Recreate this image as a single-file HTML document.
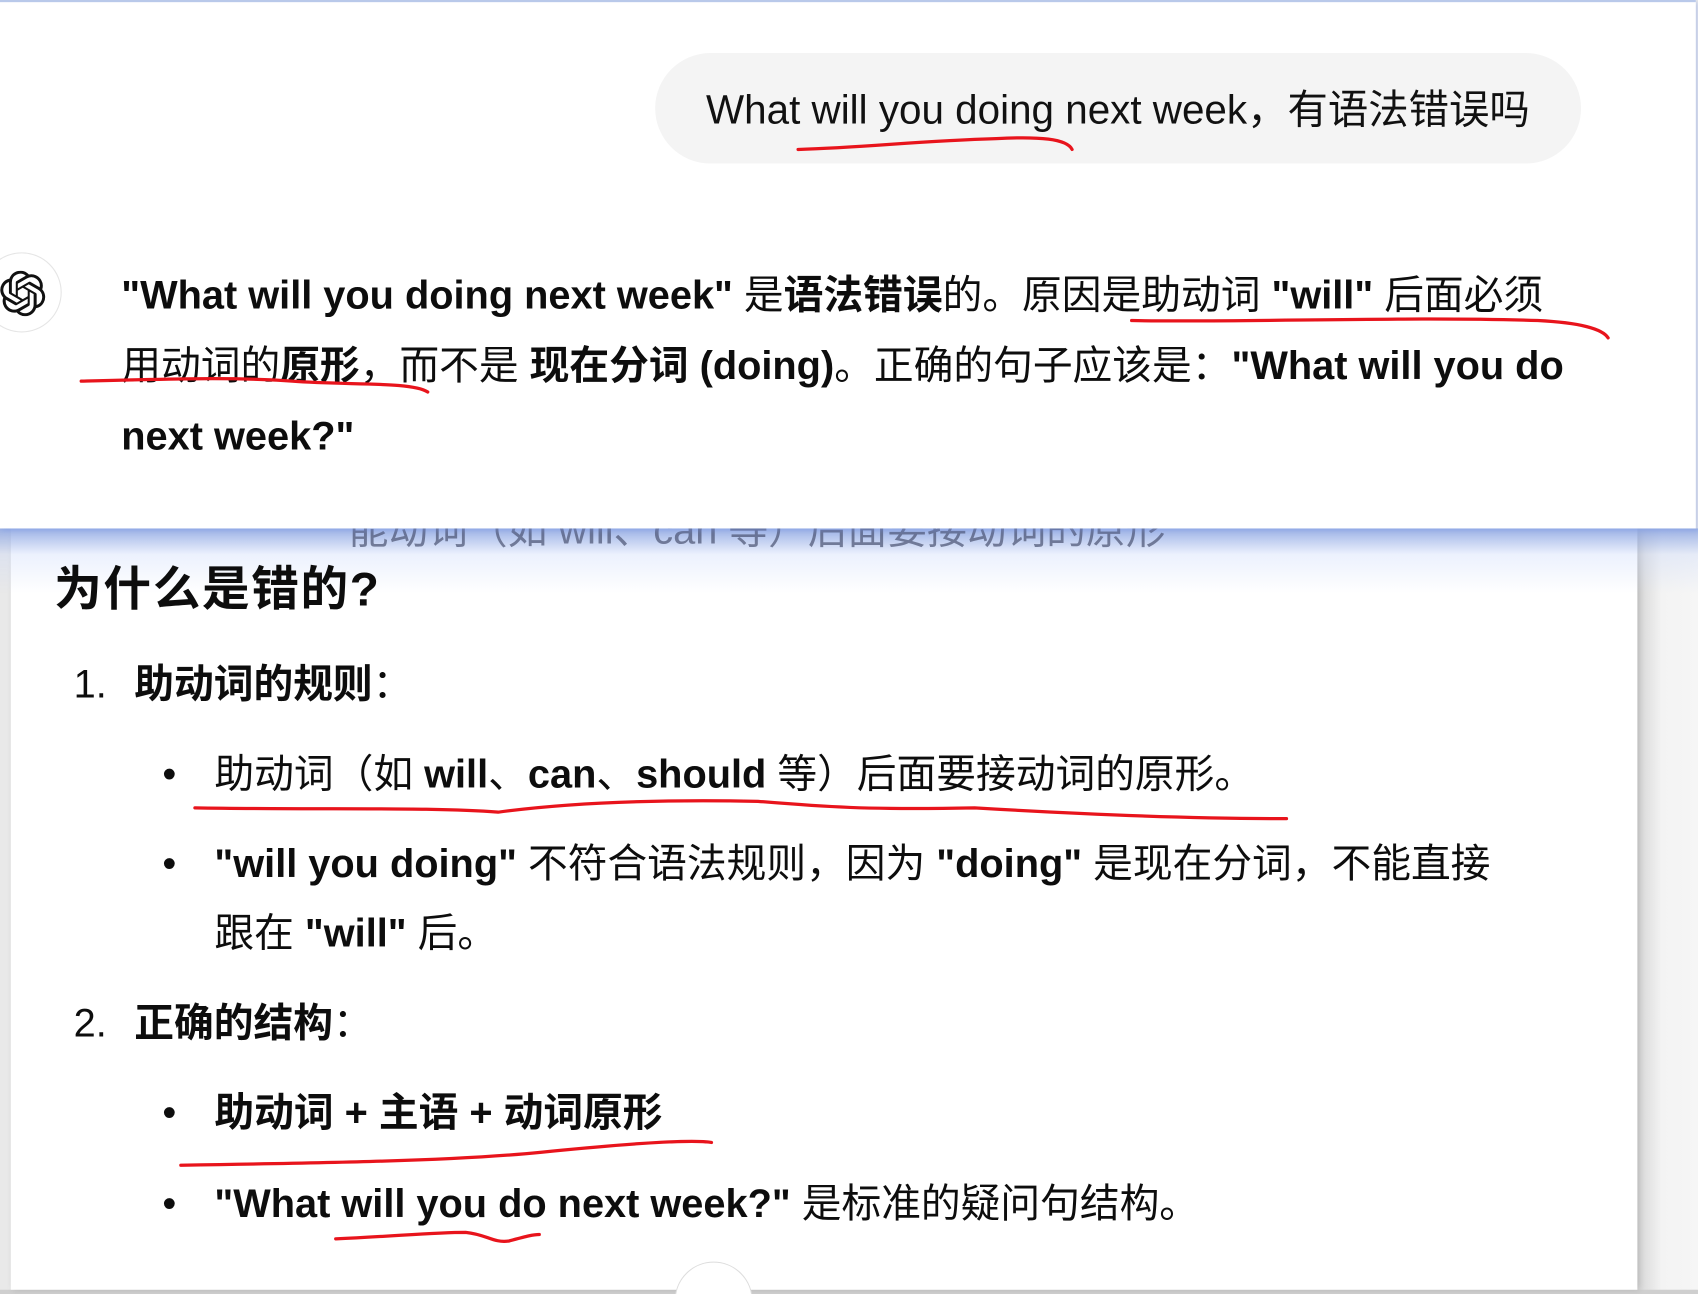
<!DOCTYPE html>
<html><head><meta charset="utf-8"><style>
html,body{margin:0;padding:0;width:1698px;height:1294px;overflow:hidden;background:#e9e9e9}
#c{position:absolute;left:0;top:0;width:1698px;height:1294px;overflow:hidden}
#w{position:absolute;left:0;top:0;width:1568px;height:1195px;overflow:hidden;transform:scale(1.0829);transform-origin:0 0;font-family:"Liberation Sans","Noto Sans CJK SC",sans-serif;color:#0d0d0d}
.t{position:absolute;white-space:nowrap;font-size:36.7px;line-height:40px}
b{font-weight:700}
.n{display:inline-block;width:56px}
</style></head><body><div id="c"><div id="w">
<div style="position:absolute;left:1512px;top:488px;width:56px;height:707px;background:linear-gradient(90deg,#d6d6d6,#f3f3f3 40%,#f6f6f6)"></div>
<div style="position:absolute;left:0;top:1191px;width:1568px;height:4px;background:#cfcfcf"></div>
<div style="position:absolute;left:10px;top:488px;width:1502px;height:703px;background:#fff;box-shadow:2px 0 6px rgba(0,0,0,.15)"></div>
<div style="position:absolute;left:0;top:488px;width:1568px;height:60px;background:linear-gradient(180deg,rgba(140,165,225,.85),rgba(200,215,250,.35) 40%,rgba(255,255,255,0))"></div>
<div class="t" style="left:322px;top:470px;color:#4b5372;opacity:.7">能动词（如 will、can 等）后面要接动词的原形</div>
<div style="position:absolute;left:0;top:0;width:1566px;height:488px;background:#fff;border-top:2px solid #b9c9ea;box-sizing:border-box;box-shadow:2px 2px 4px rgba(120,150,230,.4)"></div>
<div style="position:absolute;left:605px;top:49px;width:855px;height:102px;border-radius:51px;background:#f4f4f4"></div>
<div class="t" style="left:652px;top:81px;font-size:37.3px;color:#111">What will you doing next week，有语法错误吗</div>
<div style="position:absolute;left:-17px;top:233px;width:72px;height:72px;border-radius:50%;border:1.5px solid #e5e5e5;background:#fff"></div>
<svg style="position:absolute;left:0;top:250px" width="42" height="42" viewBox="0 0 24 24"><path fill="#111" d="M22.28 9.82a5.980 5.98 0 0 0-.52-4.91 6.05 6.05 0 0 0-6.51-2.9A6.07 6.07 0 0 0 4.98 4.180a5.98 5.98 0 0 0-4 2.9 6.05 6.05 0 0 0 .74 7.1 5.98 5.98 0 0 0 .51 4.91 6.05 6.05 0 0 0 6.52 2.9A5.98 5.98 0 0 0 13.26 24a6.06 6.06 0 0 0 5.77-4.21 5.99 5.99 0 0 0 4-2.9 6.06 6.06 0 0 0-.75-7.07zM13.26 22.43a4.48 4.48 0 0 1-2.88-1.04l.14-.08 4.78-2.76a.8.8 0 0 0 .39-.68v-6.74l2.02 1.17a.07.07 0 0 1 .04.05v5.58a4.5 4.5 0 0 1-4.49 4.5zM3.6 18.3a4.47 4.47 0 0 1-.53-3.01l.14.08 4.78 2.76a.77.77 0 0 0 .78 0l5.84-3.37v2.33a.08.08 0 0 1-.03.06L9.740 19.95a4.5 4.5 0 0 1-6.14-1.65zM2.34 7.9a4.49 4.49 0 0 1 2.37-1.97v5.68a.77.77 0 0 0 .39.68l5.81 3.35-2.02 1.170a.08.08 0 0 1-.07 0l-4.83-2.79A4.5 4.5 0 0 1 2.34 7.87zm16.6 3.86L13.1 8.36 15.12 7.2a.08.08 0 0 1 .07 0l4.83 2.79a4.49 4.49 0 0 1-.68 8.1v-5.68a.79.79 0 0 0-.41-.67zm2.01-3.02l-.14-.09-4.77-2.78a.78.78 0 0 0-.79 0L9.41 9.23V6.9a.07.07 0 0 1 .03-.06l4.830-2.79a4.5 4.5 0 0 1 6.68 4.66zM8.31 12.86l-2.02-1.16a.08.08 0 0 1-.04-.06V6.07a4.5 4.5 0 0 1 7.38-3.45l-.14.08-4.78 2.76a.8.8 0 0 0-.39.68zm1.1-2.37l2.6-1.5 2.61 1.5v3l-2.6 1.5-2.61-1.5z"/></svg>
<div class="t" style="left:112px;top:253px"><b>"What will you doing next week"</b> 是<b>语法错误</b>的。原因是助动词 <b>"will"</b> 后面必须</div>
<div class="t" style="left:112px;top:318px">用动词的<b>原形</b>，而不是 <b>现在分词 (doing)</b>。正确的句子应该是：<b>"What will you do</b></div>
<div class="t" style="left:112px;top:383px"><b>next week?"</b></div>
<div class="t" style="left:50px;top:522px;font-size:44px;line-height:46px;letter-spacing:1.5px"><b>为什么是错的?</b></div>
<div class="t" style="left:68px;top:612px"><span class="n">1.</span><b>助动词的规则</b>：</div>
<div class="t" style="left:150px;top:695px">•</div>
<div class="t" style="left:198px;top:695px">助动词（如 <b>will</b>、<b>can</b>、<b>should</b> 等）后面要接动词的原形。</div>
<div class="t" style="left:150px;top:778px">•</div>
<div class="t" style="left:198px;top:778px"><b>"will you doing"</b> 不符合语法规则，因为 <b>"doing"</b> 是现在分词，不能直接</div>
<div class="t" style="left:198px;top:842px">跟在 <b>"will"</b> 后。</div>
<div class="t" style="left:68px;top:925px"><span class="n">2.</span><b>正确的结构</b>：</div>
<div class="t" style="left:150px;top:1008px">•</div>
<div class="t" style="left:198px;top:1008px"><b>助动词 + 主语 + 动词原形</b></div>
<div class="t" style="left:150px;top:1092px">•</div>
<div class="t" style="left:198px;top:1092px"><b>"What will you do next week?"</b> 是标准的疑问句结构。</div>
<div style="position:absolute;left:623px;top:1165px;width:70px;height:70px;border-radius:50%;border:1.5px solid #ddd;background:#fff"></div>
<svg style="position:absolute;left:0;top:0" width="1568" height="1195" fill="none" stroke="#e8141c" stroke-width="3" stroke-linecap="round">
<path d="M737 138 C800 136 850 130 920 128 C960 126 985 128 990 138"/>
<path d="M1045 296 C1150 298 1300 292 1420 296 C1460 298 1480 304 1485 312"/>
<path d="M75 352 C150 350 220 348 270 352 C320 356 380 352 395 362"/>
<path d="M180 746 C300 748 400 745 460 750 C520 742 600 738 700 740 C760 745 800 748 900 746 C1000 752 1100 756 1188 756"/>
<path d="M167 1076 C300 1074 420 1072 500 1064 C580 1056 640 1052 657 1055"/>
<path d="M310 1144 C360 1142 400 1138 430 1138 C450 1140 455 1148 470 1146 C485 1142 492 1140 498 1140"/>
</svg>
</div></div></body></html>
